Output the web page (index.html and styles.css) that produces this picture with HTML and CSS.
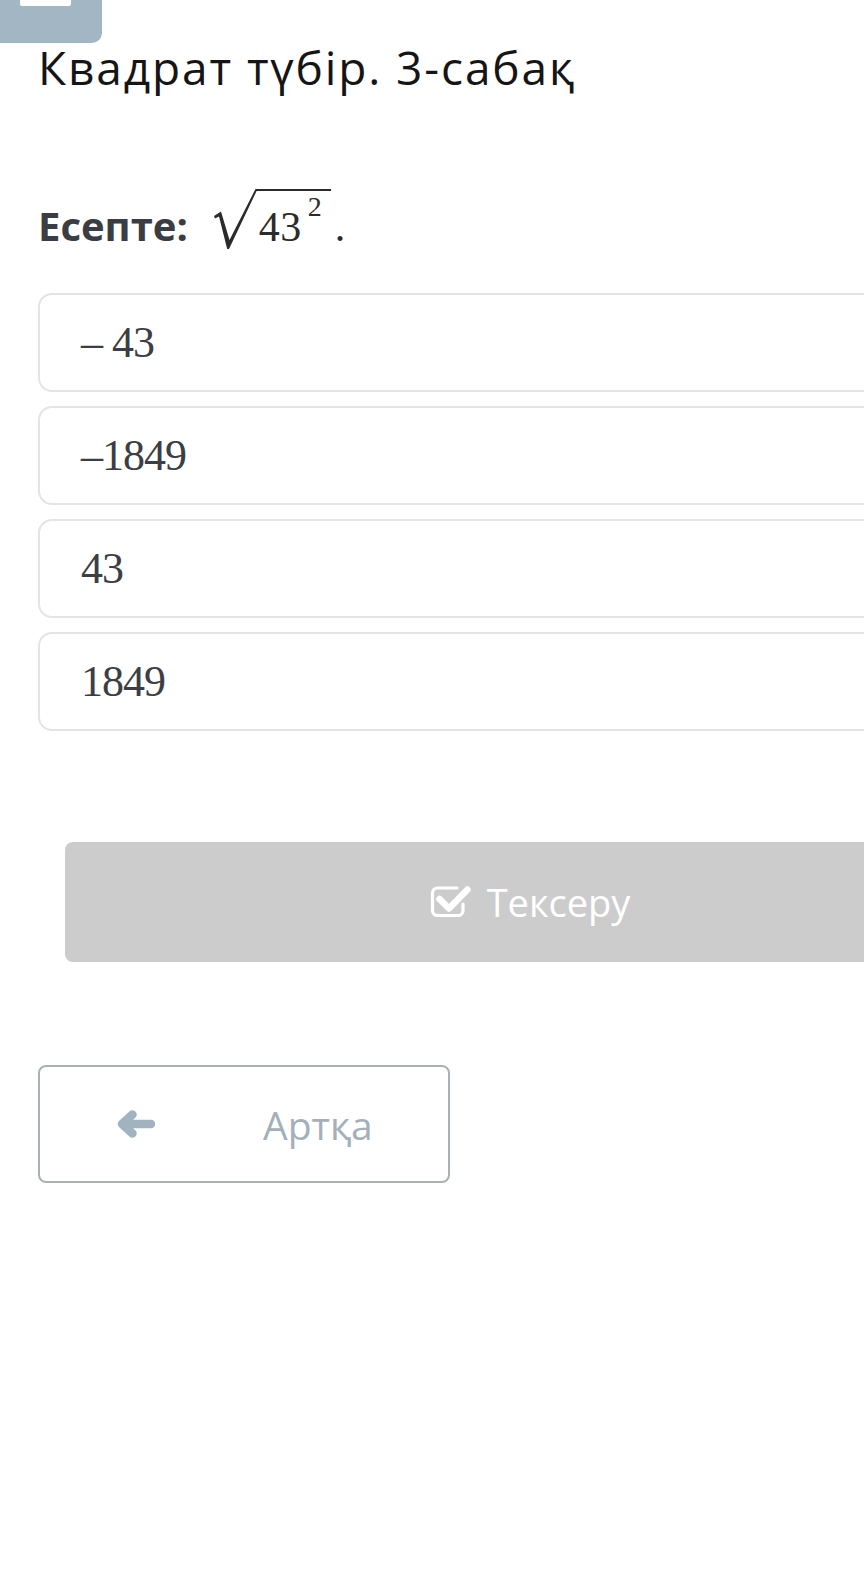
FILE: index.html
```html
<!DOCTYPE html>
<html lang="kk">
<head>
<meta charset="utf-8">
<title>Квадрат түбір. 3-сабақ</title>
<link rel="stylesheet" href="styles.css">
</head>
<body>
<div class="tab"><span class="tab-bar"></span></div>
<div class="page">
  <h1 class="title">Квадрат түбір. 3-сабақ</h1>
  <div class="problem">
    <span class="label">Есепте:</span>
    <span class="math">
      <svg class="radical" width="44" height="60" viewBox="0 0 44 60">
        <path d="M0,27 L7,22.5 L15.5,51 L41.5,0 L44,0 L44,2 L42.6,2 L15,60 L13.2,60 L5,27.5 L1,29.5 Z" fill="#2b2b2b"/>
      </svg>
      <span class="radicand"><span class="base">43</span><span class="sup">2</span></span>
      <span class="dot">.</span>
    </span>
  </div>
  <div class="options">
    <div class="option"><span class="opt-text">– 43</span></div>
    <div class="option"><span class="opt-text">–1849</span></div>
    <div class="option"><span class="opt-text">43</span></div>
    <div class="option"><span class="opt-text">1849</span></div>
  </div>
  <div class="check-btn">
    <svg class="check-icon" width="42" height="32" viewBox="0 0 42 32">
      <path d="M27,3 H7.5 A5,5 0 0 0 2.5,8 V25.5 A5,5 0 0 0 7.5,30.5 H28 A5,5 0 0 0 33,25.5 V19" fill="none" stroke="#fff" stroke-width="3.2" stroke-linecap="round"/>
      <path d="M9.5,14 L19,23.5 L37.5,4.5" fill="none" stroke="#fff" stroke-width="6.5" stroke-linecap="round" stroke-linejoin="round"/>
    </svg>
    <span class="check-text">Тексеру</span>
  </div>
  <div class="back-btn">
    <svg class="back-icon" width="38" height="28" viewBox="0 0 38 28">
      <path d="M9,14 H34" fill="none" stroke="#a2b3c0" stroke-width="8.5" stroke-linecap="round"/>
      <path d="M15.5,4.5 L5,14 L15.5,23.5" fill="none" stroke="#a2b3c0" stroke-width="8.5" stroke-linecap="round" stroke-linejoin="round"/>
    </svg>
    <span class="back-text">Артқа</span>
  </div>
</div>
</body>
</html>
```
FILE: styles.css
```css
html, body {
  margin: 0;
  padding: 0;
  background: #ffffff;
}
body {
  overflow: hidden;
  font-family: "Open Sans", "Noto Sans", sans-serif;
  width: 864px;
  height: 1588px;
}
.tab {
  width: 102px;
  height: 43px;
  background: #a3b6c3;
  border-bottom-right-radius: 10px;
}
.tab-bar {
  display: block;
  margin-left: 20px;
  width: 51px;
  height: 6px;
  background: #ffffff;
  border-radius: 0 0 2px 2px;
}
.page {
  width: 1060px;
  box-sizing: border-box;
  padding: 0 38px;
}
.title {
  margin: 0;
  font-weight: 400;
  font-size: 46px;
  line-height: 48px;
  letter-spacing: 1.9px;
  color: #151515;
}
.problem {
  margin-top: 98px;
  height: 60px;
  display: flex;
  align-items: flex-start;
}
.label {
  margin-top: 12px;
  font-weight: 700;
  font-size: 40px;
  line-height: 50px;
  color: #3a3d42;
}
.math {
  display: flex;
  align-items: flex-start;
  margin-left: 26px;
  font-family: "Liberation Serif", "Times New Roman", serif;
  color: #2b2b2b;
}
.radical {
  display: block;
  flex: none;
}
.radicand {
  display: flex;
  align-items: flex-start;
  margin-left: -2px;
  border-top: 2px solid #2b2b2b;
  padding: 0 9px 0 3px;
  white-space: nowrap;
}
.base {
  padding-top: 15px;
  font-size: 42px;
  line-height: 42px;
  letter-spacing: 0.5px;
}
.sup {
  padding-top: 2px;
  margin-left: 6px;
  font-size: 28px;
  line-height: 28px;
}
.dot {
  margin-left: 4px;
  padding-top: 17px;
  font-size: 42px;
  line-height: 42px;
}
.options {
  margin-top: 44px;
  display: flex;
  flex-direction: column;
  gap: 14px;
}
.option {
  height: 99px;
  box-sizing: border-box;
  border: 2px solid #e4e4e4;
  border-radius: 14px;
  display: flex;
  align-items: center;
  padding-left: 41px;
}
.opt-text {
  font-family: "Liberation Serif", "Times New Roman", serif;
  font-size: 44px;
  letter-spacing: -1px;
  color: #3b3e44;
}
.check-btn {
  margin: 111px 27px 0 27px;
  height: 120px;
  background: #cccccc;
  border-radius: 8px;
  display: flex;
  align-items: center;
  justify-content: center;
  gap: 15px;
}
.check-icon {
  display: block;
  margin-top: -3px;
}
.check-text {
  font-size: 38px;
  color: #ffffff;
}
.back-btn {
  margin-top: 103px;
  width: 412px;
  height: 118px;
  box-sizing: border-box;
  border: 2px solid #a9b1b7;
  border-radius: 8px;
  display: flex;
  align-items: center;
  padding-left: 77px;
}
.back-icon {
  display: block;
}
.back-text {
  margin-left: 108px;
  font-size: 39px;
  color: #a4b0b9;
}
```
